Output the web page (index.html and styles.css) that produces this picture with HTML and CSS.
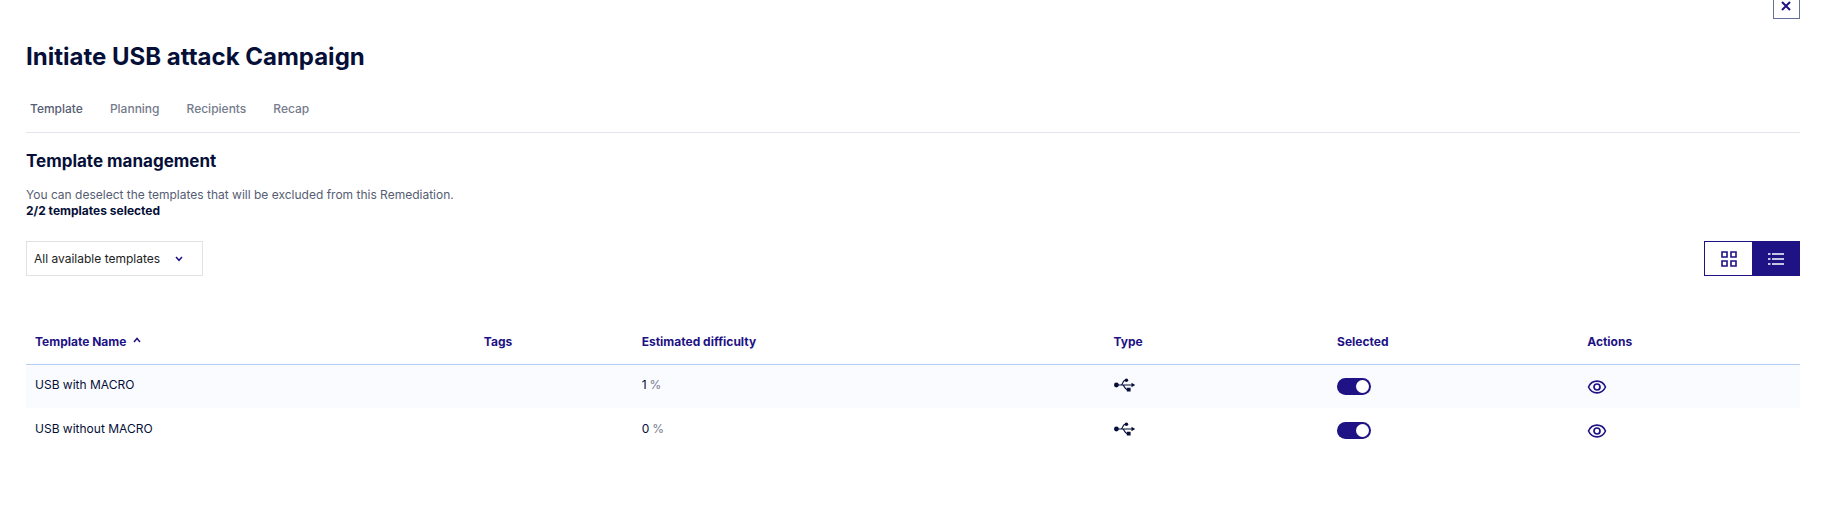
FILE: index.html
```
<!DOCTYPE html>
<html lang="en">
<head>
    <meta charset="UTF-8">
    <title>Initiate USB attack Campaign</title>
    <link rel="stylesheet" href="styles.css">
</head>
<body>

<svg id="svg-templates">
    <symbol id="icon-usb" viewBox="0 0 22 14">
        <circle cx="2.4" cy="7" r="2.4" fill="currentColor"/>
        <path d="M2 7H19M7 7C9 7 8.5 2.4 11 2.4H12M8.5 7C10.5 7 10.5 11.6 13 11.6H14" fill="none" stroke="currentColor" stroke-width="1.2"/>
        <circle cx="12.4" cy="2.3" r="1.8" fill="currentColor"/>
        <path d="M12.8 9.8H16.6V13.4H12.8ZM17.5 4.8L21.2 7L17.5 9.2Z" fill="currentColor"/>
    </symbol>
    <symbol id="icon-eye" viewBox="0 0 20 14">
        <path d="M1.5 7C3.3 3 6.4 1.1 10 1.1S16.7 3 18.5 7C16.7 11 13.6 12.9 10 12.9S3.3 11 1.5 7Z" fill="none" stroke="currentColor" stroke-width="1.6"/>
        <circle cx="10" cy="7" r="3" fill="none" stroke="currentColor" stroke-width="1.7"/>
    </symbol>
</svg>

<main class="page">
    <div class="top-bar">
        <button class="close-btn" type="button" aria-label="Close">
            <svg width="11" height="10" viewBox="0 0 11 10"><path d="M1 1L9 9M9 1L1 9"/></svg>
        </button>
    </div>

    <h1>Initiate USB attack Campaign</h1>

    <nav class="tabs">
        <a class="active" href="#template">Template</a>
        <a href="#planning">Planning</a>
        <a href="#recipients">Recipients</a>
        <a href="#recap">Recap</a>
    </nav>

    <h2>Template management</h2>
    <p class="intro">You can deselect the templates that will be excluded from this Remediation.</p>
    <p class="count">2/2 templates selected</p>

    <div class="toolbar">
        <div class="filter">
            <select aria-label="Filter templates">
                <option>All available templates</option>
            </select>
            <svg class="filter-arrow" width="8" height="6" viewBox="0 0 8 6"><path d="M1 1L4 4.3L7 1"/></svg>
        </div>
        <div class="view-toggle">
            <button type="button" aria-label="Grid view">
                <svg width="16" height="16" viewBox="0 0 16 16"><path d="M1 1H6V6H1ZM10 1H15V6H10ZM1 10H6V15H1ZM10 10H15V15H10Z"/></svg>
            </button>
            <button class="active" type="button" aria-label="List view">
                <svg width="16" height="16" viewBox="0 0 16 16"><path d="M4 3H16M4 8H16M4 13H16M0 3H2.5M0 8H2.5M0 13H2.5"/></svg>
            </button>
        </div>
    </div>

    <table class="templates">
        <colgroup>
            <col class="col-name">
            <col class="col-tags">
            <col class="col-difficulty">
            <col class="col-type">
            <col class="col-selected">
            <col class="col-actions">
        </colgroup>
        <thead>
            <tr>
                <th aria-sort="ascending">Template Name
                    <svg class="sort-arrow" width="8" height="6" viewBox="0 0 8 6"><path d="M1 5L4 1.5L7 5"/></svg>
                </th>
                <th>Tags</th>
                <th>Estimated difficulty</th>
                <th>Type</th>
                <th>Selected</th>
                <th>Actions</th>
            </tr>
        </thead>
        <tbody>
            <tr>
                <td>USB with MACRO</td>
                <td></td>
                <td>1<span class="unit">%</span></td>
                <td><svg class="usb"><use href="#icon-usb"/></svg></td>
                <td><input class="switch" type="checkbox" aria-label="Select USB with MACRO" checked></td>
                <td><button class="view-btn" type="button" aria-label="Preview USB with MACRO"><svg><use href="#icon-eye"/></svg></button></td>
            </tr>
            <tr>
                <td>USB without MACRO</td>
                <td></td>
                <td>0<span class="unit">%</span></td>
                <td><svg class="usb"><use href="#icon-usb"/></svg></td>
                <td><input class="switch" type="checkbox" aria-label="Select USB without MACRO" checked></td>
                <td><button class="view-btn" type="button" aria-label="Preview USB without MACRO"><svg><use href="#icon-eye"/></svg></button></td>
            </tr>
        </tbody>
    </table>
</main>

</body>
</html>
```
FILE: styles.css
```
* {
    box-sizing: border-box;
}

body {
    font-family: Inter, "Open Sans", sans-serif;
    font-size: 12px;
    line-height: 16px;
    background-color: #fff;
    color: #050f38;
    margin: 0;
}

#svg-templates {
    display: none;
}

svg {
    fill: none;
    stroke: currentColor;
}

button {
    display: flex;
    align-items: center;
    justify-content: center;
    padding: 0;
    border: none;
    background: none;
    color: #1e1284;
    cursor: pointer;
}

.page {
    padding: 0 33px 48px 26px;
}

/* the close button is partly scrolled out at the top */
.top-bar {
    display: flex;
    justify-content: flex-end;
    margin-top: -8px;
}

.close-btn {
    width: 27px;
    height: 27px;
    border: 1px solid #66709a;
}

.close-btn svg {
    stroke-width: 2;
}

h1 {
    margin: 22px 0 0;
    font-size: 24px;
    line-height: 32px;
    font-weight: 700;
}

.tabs {
    display: flex;
    gap: 27px;
    margin-top: 28px;
    padding: 0 4px 15px;
    border-bottom: 1px solid #e4e5ed;
}

.tabs a {
    color: #757b8c;
    font-weight: 500;
    text-decoration: none;
}

.tabs a.active {
    color: #565d73;
}

h2 {
    margin: 16px 0 0;
    font-size: 17px;
    line-height: 24px;
    font-weight: 700;
}

p {
    margin: 0;
}

.intro {
    margin-top: 14px;
    color: #565d73;
}

.count {
    font-weight: 700;
}

.toolbar {
    display: flex;
    justify-content: space-between;
    margin-top: 22px;
}

.filter {
    position: relative;
}

.filter select {
    appearance: none;
    width: 177px;
    height: 35px;
    padding: 0 28px 0 7px;
    border: 1px solid #e2e2e6;
    border-radius: 0;
    background-color: #fff;
    color: #222;
    font: inherit;
}

.filter-arrow {
    position: absolute;
    top: 15px;
    right: 20px;
    color: #1e1284;
    stroke-width: 1.5;
    pointer-events: none;
}

.view-toggle {
    display: flex;
    border: 1px solid #1e1284;
}

.view-toggle button {
    width: 47px;
    height: 33px;
}

.view-toggle button.active {
    background-color: #1e1284;
    color: #fff;
}

.view-toggle svg {
    stroke-width: 1.6;
}

.templates {
    width: 100%;
    margin-top: 44px;
    border-collapse: collapse;
    table-layout: fixed;
}

.col-name {
    width: 25.3%;
}

.col-tags {
    width: 8.9%;
}

.col-difficulty {
    width: 26.6%;
}

.col-type {
    width: 12.6%;
}

.col-selected {
    width: 14.1%;
}

.col-actions {
    width: 12.5%;
}

th,
td {
    height: 44px;
    padding: 0 9px;
    text-align: left;
    vertical-align: middle;
}

th {
    color: #1e1284;
    font-weight: 700;
    border-bottom: 1px solid #b5cef8;
}

td {
    padding-bottom: 3px;
}

tbody tr:nth-child(odd) {
    background-color: #fafbff;
}

.sort-arrow {
    margin-left: 4px;
    vertical-align: 3px;
    stroke-width: 1.5;
}

.unit {
    margin-left: 3px;
    color: #757b8c;
}

.usb {
    display: block;
    width: 22px;
    height: 14px;
    stroke: none;
}

.switch {
    appearance: none;
    display: flex;
    align-items: center;
    justify-content: flex-end;
    width: 34px;
    height: 17px;
    margin: 3px 0 0;
    padding: 2px;
    border-radius: 9px;
    background-color: #1e1284;
}

.switch::before {
    content: "";
    width: 13px;
    height: 13px;
    border-radius: 50%;
    background-color: #fff;
}

.switch:not(:checked) {
    justify-content: flex-start;
    background-color: #a5a9b8;
}

.view-btn {
    margin-top: 4px;
}

.view-btn svg {
    width: 20px;
    height: 14px;
    stroke: none;
}
```
